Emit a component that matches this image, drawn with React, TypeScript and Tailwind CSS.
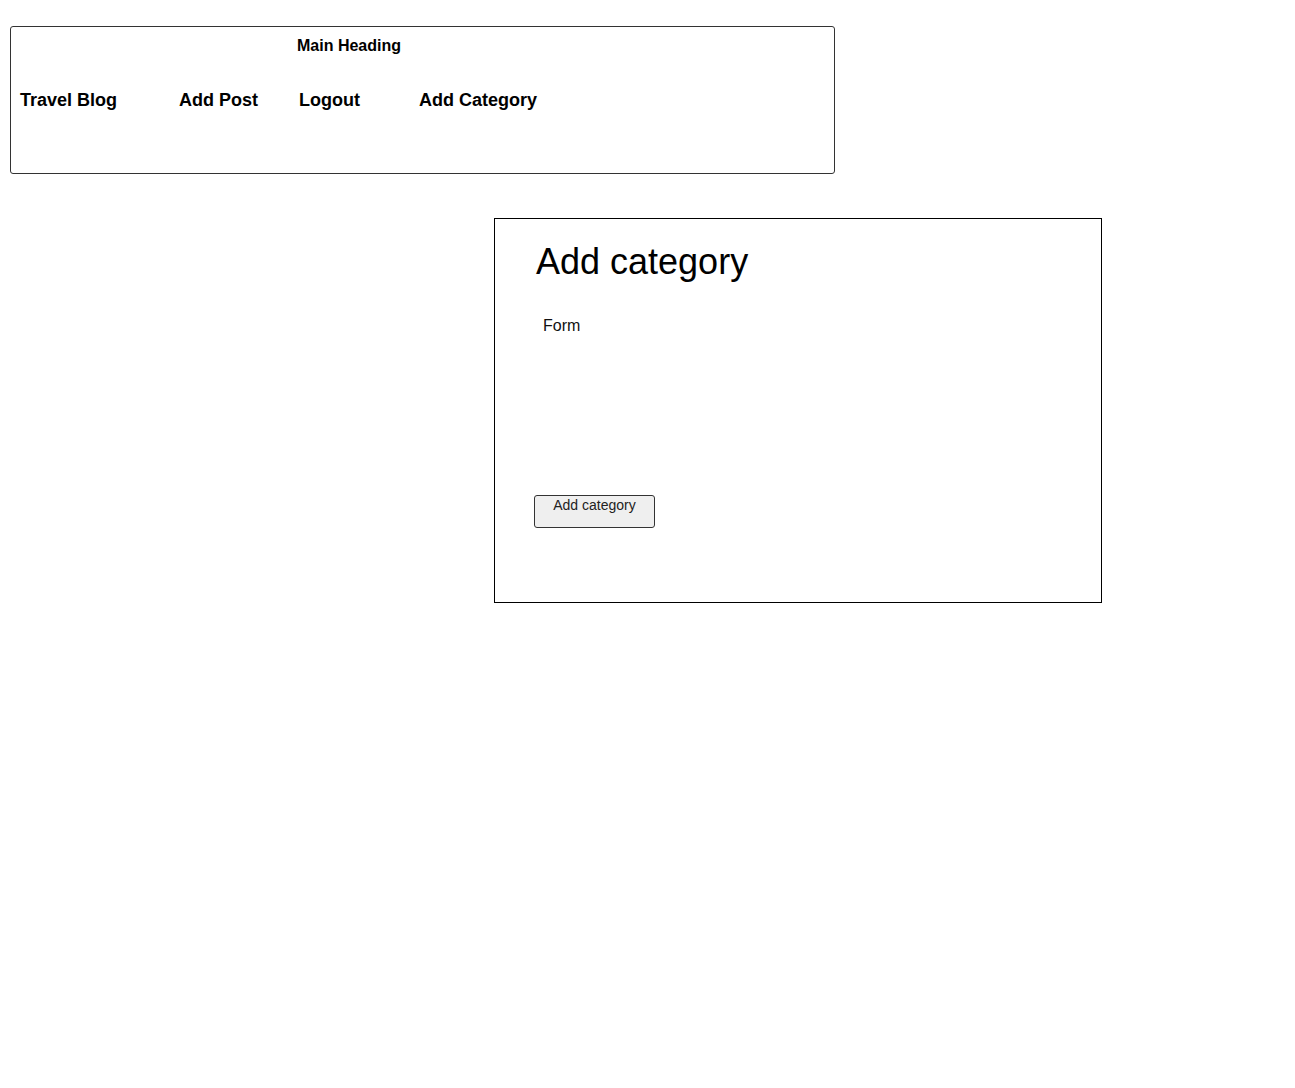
export default function App() {
  const navItems = [
    { label: "Travel Blog", w: "w-[159px]" },
    { label: "Add Post", w: "w-[120px]" },
    { label: "Logout", w: "w-[120px]" },
    { label: "Add Category", w: "w-[120px]" },
  ];

  return (
    <div className="min-h-[1088px] bg-white font-['Liberation_Sans',Arial,sans-serif] text-black">
      <div className="pt-[26px] pl-[10px]">
        <header className="flex h-[148px] w-[825px] flex-col rounded-[3px] border border-[#333]">
          <div className="mt-[9px] pl-[286px] text-[16px] leading-[20px] font-bold">Main Heading</div>
          <nav className="mt-[32px] flex pl-[9px]">
            {navItems.map((item) => (
              <span key={item.label} className={`${item.w} shrink-0 whitespace-nowrap text-[18px] leading-[24px] font-bold`}>
                {item.label}
              </span>
            ))}
          </nav>
        </header>
      </div>

      <main className="mt-[44px] ml-[494px] flex h-[385px] w-[608px] flex-col border border-black">
        <h1 className="mt-[22px] pl-[41px] text-[36px] leading-[41px] font-normal">Add category</h1>
        <div className="mt-[35px] pl-[48px] text-[16px] leading-[18px] text-[#111]">Form</div>
        <div className="mt-[160px] pl-[39px]">
          <button
            type="button"
            className="flex h-[33px] w-[121px] items-start justify-center rounded-[3px] border border-[#333] bg-[#efefef] pt-0 text-[14px] leading-[18px] text-[#222]"
          >
            Add category
          </button>
        </div>
      </main>
    </div>
  );
}
